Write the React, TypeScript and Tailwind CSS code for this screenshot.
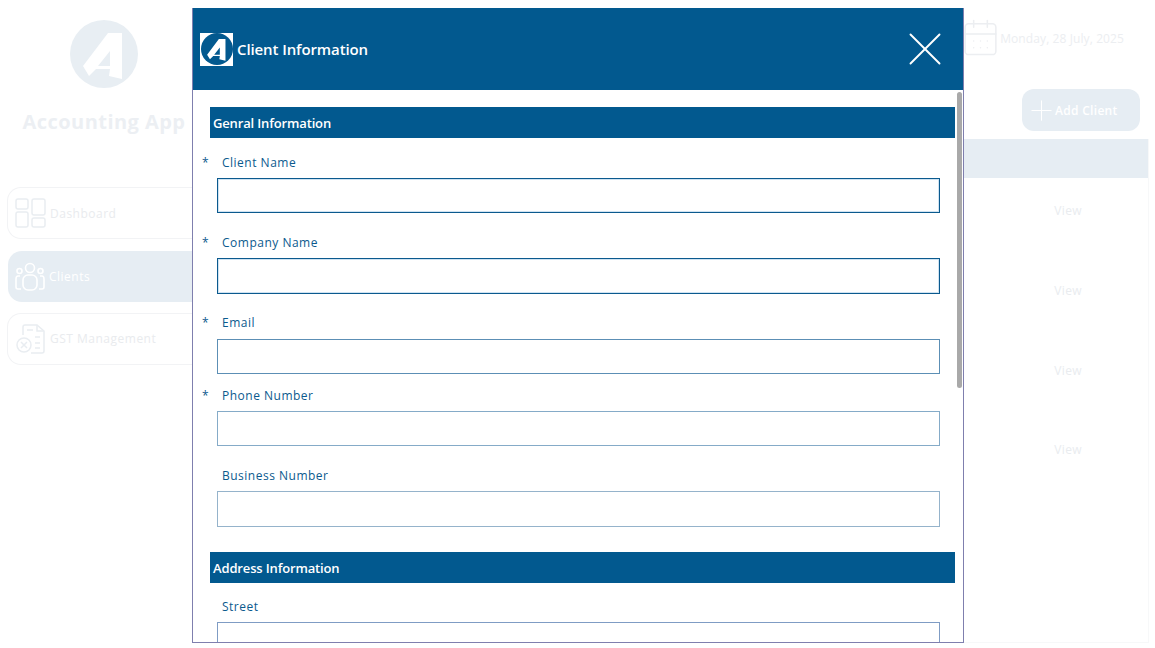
import { CalendarDays, Plus, X } from "lucide-react"

const sansFont = "font-['Open_Sans','Noto_Sans',sans-serif]"

const LogoMark = ({ className }: { className: string }) => (
  <svg viewBox="0 0 68 68" className={className}>
    <circle cx="34" cy="34" r="34" fill="currentColor" />
    <path
      fillRule="evenodd"
      d="M38 13 L52 13 L52 59 L39 56 L40 49 L26 49 L19 56 L13 46 Z M40 31 L28 46 L40 46 Z"
      fill="#fff"
    />
  </svg>
)

const DashboardIcon = () => (
  <svg viewBox="0 0 32 32" className="w-8 h-8 shrink-0" fill="none" stroke="#e9edf1" strokeWidth="1.5">
    <rect x="1" y="2" width="12" height="10" rx="2" />
    <rect x="1" y="15" width="12" height="15" rx="2" />
    <rect x="17" y="2" width="13" height="16" rx="2" />
    <rect x="17" y="21" width="13" height="9" rx="2" />
  </svg>
)

const ClientsIcon = () => (
  <svg viewBox="0 0 32 32" className="w-8 h-8 shrink-0" fill="none" stroke="#ffffff" strokeWidth="1.6">
    <circle cx="16" cy="7" r="4.5" />
    <circle cx="5.5" cy="10" r="2.5" />
    <circle cx="26.5" cy="10" r="2.5" />
    <rect x="9" y="14" width="14" height="15" rx="5" />
    <path d="M6 15 H4 Q2 15 2 18 V26 Q2 28 4 28 H7" />
    <path d="M26 15 H28 Q30 15 30 18 V26 Q30 28 28 28 H25" />
  </svg>
)

const GstIcon = () => (
  <svg viewBox="0 0 32 32" className="w-8 h-8 shrink-0" fill="none" stroke="#e9edf1" strokeWidth="1.5">
    <path d="M8 12 V4 Q8 2 10 2 H22 L29 8 V28 Q29 30 27 30 H16" />
    <path d="M22 2 V8 H29" />
    <circle cx="9" cy="22" r="7" />
    <path d="M6 19 L12 25 M12 19 L6 25" />
    <path d="M20 14 H25 M20 20 H25 M20 25 H25 M12 7 H18" />
  </svg>
)

const Field = ({ label, required, border, mt, gap = "mt-[6px]", h = "h-[35px]" }: { label: string; required?: boolean; border: string; mt: string; gap?: string; h?: string }) => (
  <div className={mt}>
    <div className="flex items-center h-[18px] text-[12px] font-medium tracking-[0.5px] text-[#0b5a8e]">
      <span className="w-[20px]">{required ? "*" : ""}</span>
      <span>{label}</span>
    </div>
    <input className={`block ml-[15px] w-[723px] bg-white ${gap} ${h} ${border}`} />
  </div>
)

const SectionTitle = ({ title, mt }: { title: string; mt: string }) => (
  <div className={`${mt} ml-[8px] h-[31px] w-[745px] flex items-center pl-[3px] pt-[2px] bg-[#02598f] text-white text-[13px] font-semibold tracking-[-0.15px]`}>
    {title}
  </div>
)

export default function App() {
  return (
    <div className={`relative flex h-[648px] w-[1155px] overflow-hidden bg-white ${sansFont}`}>
      {/* faded page behind the dialog */}
      <aside className="w-[192px] shrink-0 pt-[20px] pl-[7px]">
        <div className="flex flex-col items-center pl-[9px]">
          <LogoMark className="w-[68px] h-[68px] text-[#e8eef3]" />
          <h1 className="mt-[20px] text-[20px] leading-[28px] font-bold tracking-[0.45px] whitespace-nowrap text-[#eceff3]">Accounting App</h1>
        </div>
        <nav className="mt-[51px] flex flex-col">
          <div className="flex items-center gap-[3px] h-[52px] pl-[7px] rounded-l-[14px] border border-r-0 border-[#f2f3f5] text-[#e9ebee]">
            <DashboardIcon />
            <span className="pt-[2px] text-[12px] tracking-[0.5px]">Dashboard</span>
          </div>
          <div className="mt-[12px] ml-[1px] flex items-center gap-[3px] h-[51px] pl-[6px] rounded-l-[14px] bg-[#e6edf3] text-white">
            <ClientsIcon />
            <span className="pt-[1px] text-[12px] tracking-[0.5px]">Clients</span>
          </div>
          <div className="mt-[11px] flex items-center gap-[3px] h-[52px] pl-[7px] rounded-l-[14px] border border-r-0 border-[#f2f3f5] text-[#e9ebee]">
            <GstIcon />
            <span className="text-[12px] tracking-[0.5px]">GST Management</span>
          </div>
        </nav>
      </aside>

      <main className="flex-1 min-w-0 pr-[6px] flex flex-col">
        <div className="h-[89px] shrink-0 flex items-start justify-end pr-[25px] pt-[17px] text-[#eceef1]">
          <CalendarDays className="w-[41px] h-[41px]" strokeWidth={0.9} />
          <span className="-ml-[1px] mt-[13px] text-[12px] tracking-[0.1px]">Monday, 28 July, 2025</span>
        </div>
        <div className="flex justify-end pr-[9px] shrink-0">
          <button className="flex items-center w-[118px] h-[42px] pl-[3px] rounded-[12px] bg-[#e6edf3] text-white text-[12px] font-semibold tracking-[0.3px]">
            <Plus className="w-[33px] h-[33px]" strokeWidth={0.75} />
            <span className="-ml-[3px] pt-[2px]">Add Client</span>
          </button>
        </div>
        <div className="mt-[8px] flex-1 flex flex-col border-x border-b border-[#f7f8f9] mb-[5px]">
          <div className="h-[39px] shrink-0 bg-[#e6edf3]" />
          <div className="flex flex-col items-end pr-[66px] text-[12px] tracking-[0.4px] text-[#e9ecef]">
            <span className="h-[80px] pt-[24px]">View</span>
            <span className="h-[80px] pt-[24px]">View</span>
            <span className="h-[79px] pt-[24px]">View</span>
            <span className="h-[80px] pt-[24px]">View</span>
          </div>
        </div>
      </main>

      {/* dialog */}
      <div className="absolute left-[192px] top-[8px] w-[772px] h-[635px] overflow-hidden bg-white border-x border-b border-[#7f7fae]">
        <header className="-mx-px h-[82px] flex items-center bg-[#02598f] text-white">
          <div className="ml-[8px] w-[33px] h-[33px] bg-white flex items-center justify-center">
            <LogoMark className="w-[32px] h-[32px] text-[#02598f]" />
          </div>
          <span className="ml-[4px] text-[15px] font-semibold tracking-[-0.1px]">Client Information</span>
          <X className="ml-auto mr-[10px] w-[58px] h-[58px]" strokeWidth={0.8} />
        </header>
        <div className="pl-[9px]">
          <SectionTitle title="Genral Information" mt="mt-[17px]" />
          <Field label="Client Name" required border="border border-[#0b5a8e] shadow-[inset_0_0_0_1px_#cfe3f2]" mt="mt-[16px]" />
          <Field label="Company Name" required border="border border-[#0b5a8e] shadow-[inset_0_0_0_1px_#cfe3f2]" mt="mt-[21px]" h="h-[36px]" />
          <Field label="Email" required border="border border-[#5c8fb5]" mt="mt-[20px]" gap="mt-[7px]" />
          <Field label="Phone Number" required border="border border-[#85abc8]" mt="mt-[13px]" />
          <Field label="Business Number" border="border border-[#95b3cb]" mt="mt-[21px]" h="h-[36px]" />
          <SectionTitle title="Address Information" mt="mt-[25px]" />
          <Field label="Street" border="border border-[#7f9cc4]" mt="mt-[15px]" />
        </div>
        <div className="absolute right-[1px] top-[84px] w-[5px] h-[296px] rounded-full bg-[#a9a9a9]" />
      </div>
    </div>
  )
}
